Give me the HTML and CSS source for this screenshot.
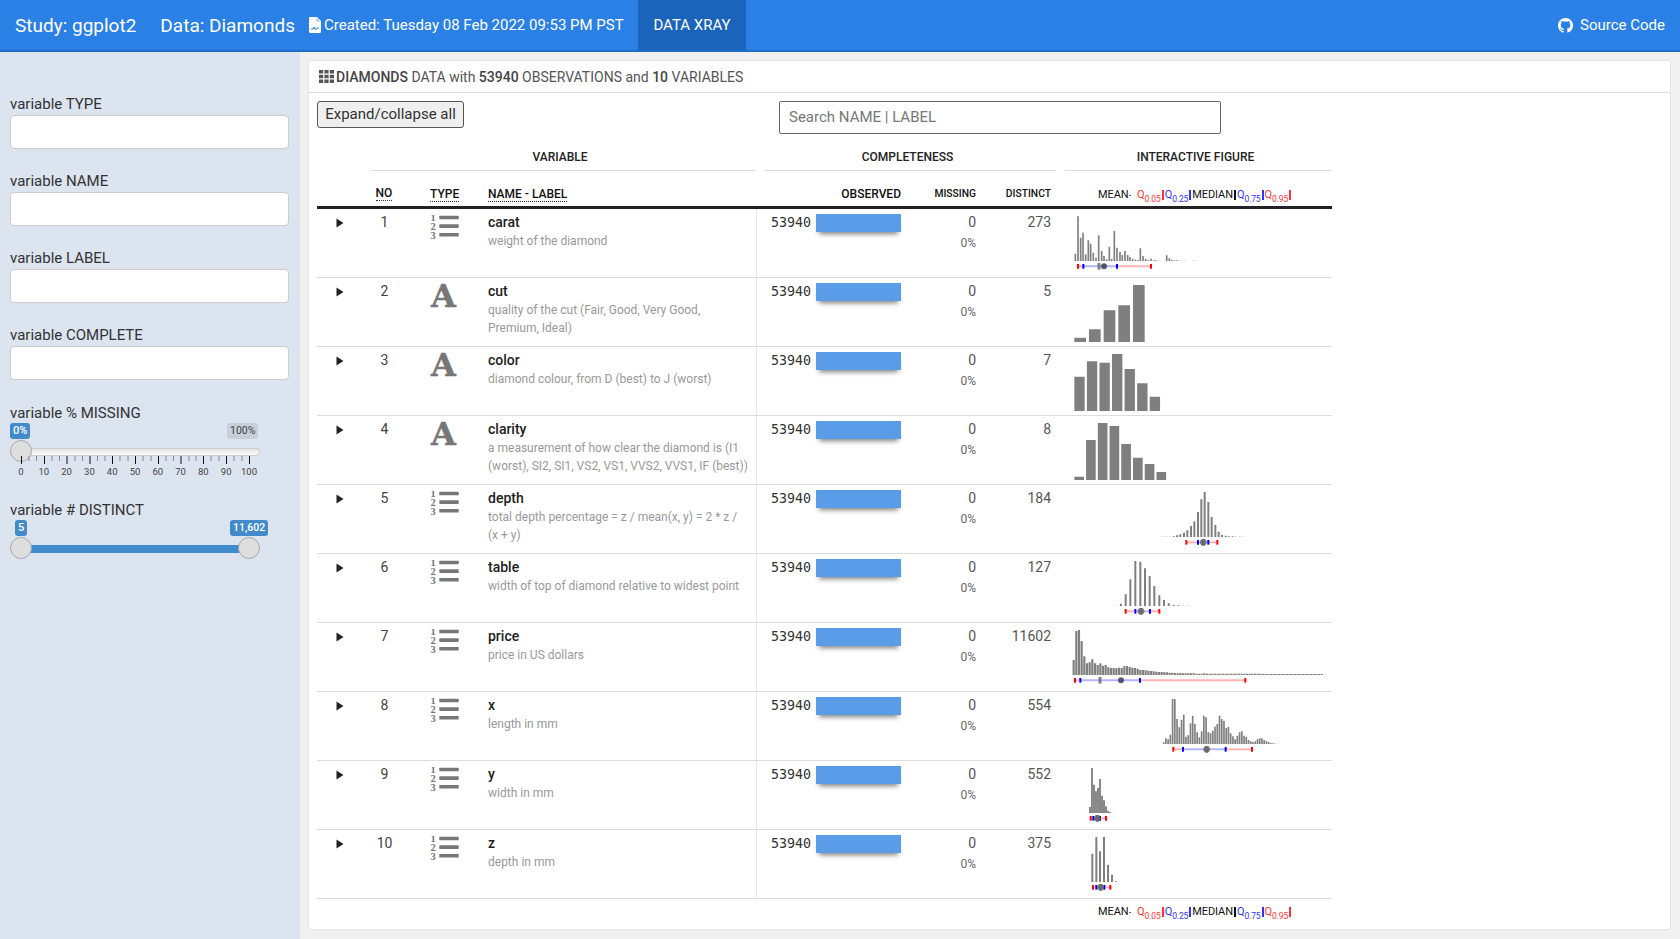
FILE: index.html
```html
<!DOCTYPE html>
<html lang="en">
<head>
<meta charset="utf-8">
<title>Data Xray</title>
<link rel="stylesheet" href="styles.css">
</head>
<body>
<svg class="defs" width="0" height="0" aria-hidden="true">
  <symbol id="num" viewBox="0 0 30 24">
    <text x="0.500" y="6" class="numeral">1</text>
    <text x="0.500" y="15" class="numeral">2</text>
    <text x="0.500" y="23.500" class="numeral">3</text>
    <rect x="9.300" y="0.700" width="19.400" height="3.600" rx="0.600"/>
    <rect x="9.300" y="9.300" width="19.400" height="3.600" rx="0.600"/>
    <rect x="9.300" y="18" width="19.400" height="3.600" rx="0.600"/>
  </symbol>
  <symbol id="tri" viewBox="0 0 8 10"><path d="M0.500 0.500 7.500 5 0.500 9.500Z"/></symbol>
</svg>

<header class="topbar">
  <span class="brand">Study: ggplot2</span>
  <span class="brand data">Data: Diamonds</span>
  <svg class="file-ico" viewBox="0 0 12 16"><path fill="#fff" d="M0 1.200C0 .5.500 0 1.200 0H8l4 4v10.800c0 .7-.5 1.200-1.200 1.200H1.200C.5 16 0 15.500 0 14.800Z"/><path fill="none" stroke="#2a80e4" stroke-width="1" d="M2 12h2l1-2 1.500 3L8 11h2"/><path fill="#2a80e4" d="M7.500 1v3.500H11z" opacity=".5"/></svg>
  <span class="created">Created: Tuesday 08 Feb 2022 09:53 PM PST</span>
  <nav class="tab">DATA XRAY</nav>
  <a class="source">
    <svg class="gh" viewBox="0 0 16 16"><path fill="#fff" d="M8 0C3.580 0 0 3.580 0 8c0 3.540 2.290 6.530 5.470 7.590.4.070.55-.17.55-.38 0-.19-.01-.82-.01-1.490-2.010.37-2.530-.49-2.690-.94-.09-.23-.48-.94-.82-1.130-.28-.15-.68-.52-.01-.53.63-.01 1.080.58 1.230.82.720 1.210 1.870.87 2.330.66.070-.52.28-.87.510-1.070-1.780-.2-3.640-.89-3.640-3.950 0-.87.310-1.590.820-2.150-.08-.2-.36-1.020.08-2.120 0 0 .67-.21 2.200.82.640-.18 1.320-.27 2-.27s1.360.09 2 .27c1.530-1.040 2.200-.82 2.200-.82.440 1.100.160 1.920.08 2.120.510.560.820 1.270.820 2.150 0 3.070-1.870 3.750-3.650 3.950.29.250.54.730.54 1.480 0 1.070-.01 1.930-.01 2.200 0 .21.150.46.550.38A8.010 8.010 0 0 0 16 8c0-4.420-3.580-8-8-8z"/></svg>
    Source Code
  </a>
</header>

<div class="page">
  <aside class="sidebar">
    <label class="filter"><span class="flabel">variable TYPE</span><input class="finput" type="text"></label>
    <label class="filter"><span class="flabel">variable NAME</span><input class="finput" type="text"></label>
    <label class="filter"><span class="flabel">variable LABEL</span><input class="finput" type="text"></label>
    <label class="filter"><span class="flabel">variable COMPLETE</span><input class="finput" type="text"></label>

    <div class="slider-block">
      <span class="flabel">variable % MISSING</span>
      <div class="slider">
        <span class="pill pill-min">0%</span>
        <span class="pill pill-max muted">100%</span>
        <div class="track"></div>
        <span class="thumb thumb-a"></span>
        <svg class="ticks" viewBox="0 0 260 9" width="260" height="9"><path class="tick-major" d="M21.500 0v8M44.500 0v8M67 0v8M90 0v8M112.500 0v8M135.500 0v8M158.500 0v8M181 0v8M203.500 0v8M226.500 0v8M249.500 0v8"/><path class="tick-minor" d="M29 0v5M36.500 0v5M52 0v5M59.500 0v5M75 0v5M82.500 0v5M97.500 0v5M105 0v5M120 0v5M128 0v5M143 0v5M151 0v5M166 0v5M173.500 0v5M189 0v5M196 0v5M211 0v5M219 0v5M234 0v5M242 0v5"/></svg>
        <div class="tick-labels"><span>0</span><span>10</span><span>20</span><span>30</span><span>40</span><span>50</span><span>60</span><span>70</span><span>80</span><span>90</span><span>100</span></div>
      </div>
    </div>

    <div class="slider-block second">
      <span class="flabel">variable # DISTINCT</span>
      <div class="slider">
        <span class="pill pill-five">5</span>
        <span class="pill pill-top">11,602</span>
        <div class="track blue"></div>
        <span class="thumb thumb-a"></span>
        <span class="thumb thumb-b"></span>
      </div>
    </div>
  </aside>

  <main class="content">
    <section class="box">
      <div class="box-head">
        <svg class="th-ico" viewBox="0 0 15 13"><path d="M0 0h4.200v3.600H0zM5.400 0h4.200v3.600H5.400zM10.800 0H15v3.600h-4.200zM0 4.700h4.200v3.600H0zM5.400 4.700h4.200v3.600H5.400zM10.800 4.700H15v3.600h-4.200zM0 9.400h4.200V13H0zM5.400 9.400h4.200V13H5.400zM10.800 9.400H15V13h-4.200z"/></svg>
        <span><b>DIAMONDS</b> DATA with <b>53940</b> OBSERVATIONS and <b>10</b> VARIABLES</span>
      </div>
      <div class="box-body">
        <div class="tools">
          <button class="btn" type="button">Expand/collapse all</button>
          <input class="search" type="text" placeholder="Search NAME | LABEL">
        </div>

        <div class="table">
          <div class="groups">
            <span class="group g1">VARIABLE</span>
            <span class="group g2">COMPLETENESS</span>
            <span class="group g3">INTERACTIVE FIGURE</span>
          </div>
          <div class="grid head">
            <span></span>
            <span class="c-no"><abbr>NO</abbr></span>
            <span class="c-type"><abbr>TYPE</abbr></span>
            <span class="c-name"><abbr>NAME - LABEL</abbr></span>
            <span class="right c-obs-h">OBSERVED</span>
            <span class="right">MISSING</span>
            <span class="right">DISTINCT</span>
            <div class="legend">
              <span class="l-mean">MEAN<i class="dot"></i></span>
              <span class="red">Q<sub>0.05</sub><i class="mark"></i></span>
              <span class="blue">Q<sub>0.25</sub><i class="mark"></i></span>
              <span>MEDIAN<i class="mark"></i></span>
              <span class="blue">Q<sub>0.75</sub><i class="mark"></i></span>
              <span class="red">Q<sub>0.95</sub><i class="mark"></i></span>
            </div>
          </div>

          <div class="grid row">
            <svg class="arrow"><use href="#tri"/></svg>
            <span class="c-no">1</span>
            <svg class="ico"><use href="#num"/></svg>
            <div class="c-name"><div class="vname">carat</div><div class="vdesc">weight of the diamond</div></div>
            <div class="c-obs"><span class="obs">53940</span><span class="bar"></span></div>
            <div class="c-miss"><div>0</div><div class="pct">0%</div></div>
            <div class="c-dist">273</div>
            <svg class="chart" data-chart="carat" viewBox="0 0 816 204"></svg>
          </div>
          <div class="grid row">
            <svg class="arrow"><use href="#tri"/></svg>
            <span class="c-no">2</span>
            <span class="ico-a">A</span>
            <div class="c-name"><div class="vname">cut</div><div class="vdesc">quality of the cut (Fair, Good, Very Good, Premium, Ideal)</div></div>
            <div class="c-obs"><span class="obs">53940</span><span class="bar"></span></div>
            <div class="c-miss"><div>0</div><div class="pct">0%</div></div>
            <div class="c-dist">5</div>
            <svg class="chart" data-chart="cut" viewBox="0 0 816 204"></svg>
          </div>
          <div class="grid row">
            <svg class="arrow"><use href="#tri"/></svg>
            <span class="c-no">3</span>
            <span class="ico-a">A</span>
            <div class="c-name"><div class="vname">color</div><div class="vdesc">diamond colour, from D (best) to J (worst)</div></div>
            <div class="c-obs"><span class="obs">53940</span><span class="bar"></span></div>
            <div class="c-miss"><div>0</div><div class="pct">0%</div></div>
            <div class="c-dist">7</div>
            <svg class="chart" data-chart="color" viewBox="0 0 816 204"></svg>
          </div>
          <div class="grid row">
            <svg class="arrow"><use href="#tri"/></svg>
            <span class="c-no">4</span>
            <span class="ico-a">A</span>
            <div class="c-name"><div class="vname">clarity</div><div class="vdesc">a measurement of how clear the diamond is (I1 (worst), SI2, SI1, VS2, VS1, VVS2, VVS1, IF (best))</div></div>
            <div class="c-obs"><span class="obs">53940</span><span class="bar"></span></div>
            <div class="c-miss"><div>0</div><div class="pct">0%</div></div>
            <div class="c-dist">8</div>
            <svg class="chart" data-chart="clarity" viewBox="0 0 816 204"></svg>
          </div>
          <div class="grid row">
            <svg class="arrow"><use href="#tri"/></svg>
            <span class="c-no">5</span>
            <svg class="ico"><use href="#num"/></svg>
            <div class="c-name"><div class="vname">depth</div><div class="vdesc">total depth percentage = z / mean(x, y) = 2 * z / (x + y)</div></div>
            <div class="c-obs"><span class="obs">53940</span><span class="bar"></span></div>
            <div class="c-miss"><div>0</div><div class="pct">0%</div></div>
            <div class="c-dist">184</div>
            <svg class="chart" data-chart="depth" viewBox="0 0 816 204"></svg>
          </div>
          <div class="grid row">
            <svg class="arrow"><use href="#tri"/></svg>
            <span class="c-no">6</span>
            <svg class="ico"><use href="#num"/></svg>
            <div class="c-name"><div class="vname">table</div><div class="vdesc">width of top of diamond relative to widest point</div></div>
            <div class="c-obs"><span class="obs">53940</span><span class="bar"></span></div>
            <div class="c-miss"><div>0</div><div class="pct">0%</div></div>
            <div class="c-dist">127</div>
            <svg class="chart" data-chart="table" viewBox="0 0 816 204"></svg>
          </div>
          <div class="grid row">
            <svg class="arrow"><use href="#tri"/></svg>
            <span class="c-no">7</span>
            <svg class="ico"><use href="#num"/></svg>
            <div class="c-name"><div class="vname">price</div><div class="vdesc">price in US dollars</div></div>
            <div class="c-obs"><span class="obs">53940</span><span class="bar"></span></div>
            <div class="c-miss"><div>0</div><div class="pct">0%</div></div>
            <div class="c-dist">11602</div>
            <svg class="chart" data-chart="price" viewBox="0 0 816 204"></svg>
          </div>
          <div class="grid row">
            <svg class="arrow"><use href="#tri"/></svg>
            <span class="c-no">8</span>
            <svg class="ico"><use href="#num"/></svg>
            <div class="c-name"><div class="vname">x</div><div class="vdesc">length in mm</div></div>
            <div class="c-obs"><span class="obs">53940</span><span class="bar"></span></div>
            <div class="c-miss"><div>0</div><div class="pct">0%</div></div>
            <div class="c-dist">554</div>
            <svg class="chart" data-chart="x" viewBox="0 0 816 204"></svg>
          </div>
          <div class="grid row">
            <svg class="arrow"><use href="#tri"/></svg>
            <span class="c-no">9</span>
            <svg class="ico"><use href="#num"/></svg>
            <div class="c-name"><div class="vname">y</div><div class="vdesc">width in mm</div></div>
            <div class="c-obs"><span class="obs">53940</span><span class="bar"></span></div>
            <div class="c-miss"><div>0</div><div class="pct">0%</div></div>
            <div class="c-dist">552</div>
            <svg class="chart" data-chart="y" viewBox="0 0 816 204"></svg>
          </div>
          <div class="grid row">
            <svg class="arrow"><use href="#tri"/></svg>
            <span class="c-no">10</span>
            <svg class="ico"><use href="#num"/></svg>
            <div class="c-name"><div class="vname">z</div><div class="vdesc">depth in mm</div></div>
            <div class="c-obs"><span class="obs">53940</span><span class="bar"></span></div>
            <div class="c-miss"><div>0</div><div class="pct">0%</div></div>
            <div class="c-dist">375</div>
            <svg class="chart" data-chart="z" viewBox="0 0 816 204"></svg>
          </div>

          <div class="grid foot">
            <div class="legend legend-foot">
              <span class="l-mean">MEAN<i class="dot"></i></span>
              <span class="red">Q<sub>0.05</sub><i class="mark"></i></span>
              <span class="blue">Q<sub>0.25</sub><i class="mark"></i></span>
              <span>MEDIAN<i class="mark"></i></span>
              <span class="blue">Q<sub>0.75</sub><i class="mark"></i></span>
              <span class="red">Q<sub>0.95</sub><i class="mark"></i></span>
            </div>
          </div>
        </div>
      </div>
    </section>
  </main>
</div>
<script src="charts.js"></script>
</body>
</html>
```
FILE: styles.css
```css
* { box-sizing: border-box; }
html, body { margin: 0; height: 939px; overflow: hidden; }
body { font-family: Roboto, "Noto Sans", sans-serif; font-size: 14px; color: #333; background: #f0f0f0; }
.defs { display: none; }

.topbar { height: 52px; background: #2a80e4; border-bottom: 2px solid #1f6cc4; color: #fff; display: flex; align-items: center; padding-left: 15px; }
.brand { font-size: 19px; margin-right: 24px; }
.brand.data { margin-right: 14px; }
.file-ico { width: 12px; height: 16px; margin-right: 3px; }
.created { font-size: 15px; width: 314px; }
.tab { background: #1b64bb; align-self: stretch; width: 108px; display: flex; align-items: center; justify-content: center; font-size: 15px; }
.source { margin-left: auto; margin-right: 15px; font-size: 15px; display: flex; align-items: center; gap: 7px; }
.gh { width: 15px; height: 15px; }

.page { display: flex; height: 887px; }
.sidebar { width: 300px; background: #dce4f0; padding: 42px 10px 0; flex: none; }
.filter { display: block; height: 77px; }
.flabel { display: block; font-size: 15px; font-weight: 400; line-height: 21px; color: #333; }
.finput { display: block; width: 279px; height: 34px; background: #fff; border: 1px solid #ccc; border-radius: 4px; }
.slider-block .flabel { line-height: 22px; margin-bottom: -2px; }
.slider-block.second { margin-top: 5px; }
.slider-block.second .flabel { margin-bottom: -3px; }
.slider { position: relative; height: 72px; }
.slider-block.second .slider { height: 50px; }
.pill { position: absolute; top: 1px; background: #428bca; color: #fff; font-size: 11px; font-weight: 500; line-height: 16px; height: 16px; padding: 0 3px; border-radius: 3px; }
.pill-min { left: 0; }
.pill.muted { background: #c8cfd9; color: #444; font-weight: 400; }
.pill-max { left: 217px; font-size: 10.500px; }
.pill-five { left: 5px; top: 2px; }
.pill-top { left: 220px; top: 2px; font-size: 10.500px; }
.track { position: absolute; left: 0; top: 26px; width: 250px; height: 8px; border-radius: 4px; background: linear-gradient(#e4e4e4, #fafafa); border: 1px solid #ccc; }
.track.blue { background: #428bca; border: 0; left: 12px; width: 228px; top: 27px; border-radius: 0; }
.thumb { position: absolute; top: 18px; width: 22px; height: 22px; border-radius: 50%; background: #dedede; border: 1px solid #aaa; }
.thumb-a { left: 0; }
.thumb-b { left: 228px; }
.slider-block.second .thumb { top: 19px; }
.ticks { position: absolute; left: -10px; top: 34px; }
.tick-major { stroke: #111; stroke-width: 1; fill: none; }
.tick-minor { stroke: #888; stroke-width: 1; fill: none; }
.tick-labels { position: absolute; left: 11px; top: 44px; width: 228px; display: flex; justify-content: space-between; font-size: 9.500px; line-height: 12px; color: #444; }
.tick-labels span { width: 0; display: flex; justify-content: center; }

.content { flex: 1; padding: 8px 9px 9px 8px; min-width: 0; }
.box { background: #fff; border: 1px solid #e4e4e4; border-radius: 3px; height: 870px; }
.box-head { height: 32px; border-bottom: 1px solid #ddd; display: flex; align-items: center; gap: 2px; padding-left: 10px; color: #555; font-size: 14px; }
.box-head b { font-weight: 500; color: #444; }
.th-ico { width: 15px; height: 13px; fill: #555; }
.box-body { padding: 8px 0 0 8px; }
.tools { display: flex; align-items: flex-start; height: 33px; }
.btn { width: 147px; height: 27px; background: #efefef; border: 1px solid #555; border-radius: 3px; font: 15px Roboto, sans-serif; color: #333; padding: 0 0 2px; }
.search { margin-left: 315px; width: 442px; height: 33px; border: 1px solid #666; border-radius: 2px; font: 15px Roboto, sans-serif; padding: 0 9px 2px; color: #333; }
.search::placeholder { color: #777; opacity: 1; }

.table { width: 1015px; }
.groups { display: grid; grid-template-columns: 386px 291px 267px; column-gap: 9px; margin-left: 53px; margin-top: 12px; height: 25px; }
.group { font-size: 12px; font-weight: 500; color: #222; text-align: center; line-height: 22px; border-bottom: 1px solid #ddd; padding-right: 6px; }
.grid { display: grid; grid-template-columns: 53px 28px 90px 269px 144px 75px 75px 281px; }
.head { height: 38px; border-bottom: 3px solid #222; align-items: end; padding-bottom: 4px; font-size: 12px; font-weight: 500; color: #111; line-height: 16px; }
.head abbr { border-bottom: 1px dotted #333; text-decoration: none; }
.head .c-no { text-align: center; font-size: 12px; }
.head .c-type { padding-left: 32px; }
.right { text-align: right; font-size: 10.300px; }
.right.c-obs-h { font-size: 12px; }
.row { height: 69px; border-bottom: 1px solid #ddd; }
.arrow { width: 8px; height: 10px; margin: 9px 0 0 19px; fill: #222; }
.c-no { text-align: center; line-height: 18px; padding-top: 4px; color: #444; }
.row .c-no { padding-left: 1px; }
.head .c-no, .head .c-type, .head .c-name { padding-top: 0; color: #111; }
.ico { width: 30px; height: 24px; margin: 6px 0 0 32px; fill: #777; overflow: visible; }
.numeral { font: bold 10.500px "Liberation Serif", serif; fill: #777; }
.ico-a { font: bold 32px/1 "DejaVu Serif", serif; color: #777; padding: 2px 0 0 33px; -webkit-text-stroke: .5px #777; }
.c-name { padding: 4px 8px 0 0; border-right: 1px solid #e8e8e8; }
.head .c-name { border-right: 0; }
.vname { font-size: 14px; font-weight: 500; color: #222; line-height: 18px; }
.vdesc { font-size: 12px; color: #999; line-height: 17.500px; margin-top: 2px; }
.c-obs { display: flex; align-items: flex-start; padding: 5px 0 0 14px; }
.obs { font: 13.330px/18px "DejaVu Sans Mono", monospace; color: #333; width: 40px; }
.bar { width: 85px; height: 18px; margin: 0 0 0 5px; background: #5b9ce8; box-shadow: 0 5px 5px -3px rgba(0,0,0,.5); }
.c-miss, .c-dist { text-align: right; padding-top: 4px; line-height: 18px; color: #555; }
.pct { font-size: 12px; color: #666; margin-top: 3px; }
.chart { width: 272px; height: 68px; margin-left: 9px; display: block; overflow: visible; }
.bars { fill: none; stroke: #7f7f7f; }
.foot { height: 26px; align-items: center; }

.legend { display: flex; align-items: center; padding-left: 47px; font-size: 11px; letter-spacing: -.1px; color: #111; white-space: nowrap; line-height: 14px; font-weight: 400; }
.legend-foot { grid-column: 8; }
.legend span { margin-right: 1px; display: flex; align-items: center; }
.legend .l-mean { width: 37px; margin-right: 2px; }
.legend sub { font-size: 8.500px; line-height: 1; vertical-align: baseline; align-self: flex-end; transform: translateY(1px); }
.red { color: #f33; }
.blue { color: #33f; }
.mark { display: inline-block; width: 2px; height: 10px; background: currentColor; margin-left: 1px; }
.dot { display: inline-block; width: 2px; height: 1px; margin-left: 1px; background: #666; }
.q-red { stroke: #ffb4b4; stroke-width: 6; }
.q-blue { stroke: #b4b4ff; stroke-width: 6; }
.q-tick-red { stroke: #f00; stroke-width: 6; }
.q-tick-blue { stroke: #00f; stroke-width: 6; }
.q-med { stroke: #666; stroke-width: 9; opacity: .8; }
.q-mean { fill: #3c3c5a; opacity: .85; }
.q-mean.merged { fill: #666; }
```
FILE: charts.js
```js
// Histogram data, in units of one third of a pixel (viewBox is 3x the pixel size).
var seq = function (start, pitch, hs) {
  return hs.map(function (h, i) { return [start + pitch * i, h]; });
};
var tail = [];
for (var t = 0; t < 14; t++) tail.push(4);
for (t = 0; t < 23; t++) tail.push(3);
var CHARTS = {
  carat: { base: 156, w: 5, bars: [[46,22],[54,134],[62,70],[69,85],[77,20],[85,62],[92,52],[100,25],[108,10],[116,77],[125,30],[132,15],[140,5],[148,43],[155,7],[163,90],[171,40],[180,27],[187,18],[195,30],[203,18],[210,12],[218,7],[226,4],[234,3],[241,38],[249,15],[257,7],[265,3],[273,7],[281,2],[288,2],[296,1],[320,17],[328,8],[335,4],[343,2],[351,2],[359,1],[367,1],[375,1],[398,1],[406,1]], q: [54,70,117,132,171,273] },
  cut: { base: 192, w: 35, bars: seq(60.5, 44, [13,38,95,110,171]) },
  color: { base: 192, w: 31, bars: seq(58.5, 37.7, [103,149,145,171,126,83,43]) },
  clarity: { base: 192, w: 29, bars: seq(57.5, 35.2, [10,120,171,162,108,67,48,24]) },
  depth: { base: 156, w: 6, bars: [[310,1],[320,1],[330,1],[341,2],[351,5],[361,8],[372,13],[382,20],[393,33],[403,47],[414,75],[424,113],[434,135],[445,105],[455,60],[466,36],[476,16],[486,6],[497,4],[507,2],[518,2],[528,1],[540,1],[550,1]], q: [379,414,430,430,445,472] },
  table: { base: 156, w: 6, bars: [[172,1],[183,7],[197,35],[211,80],[226,135],[241,133],[255,113],[269,90],[283,60],[298,32],[312,18],[326,8],[341,3],[355,2],[370,1],[384,1]], q: [197,226,243,243,270,298] },
  price: { base: 156, w: 6.5, bars: seq(41, 8, [45,132,135,102,56,35,38,47,35,30,35,28,30,23,21,21,20,22,21,26,27,24,22,21,19,15,15,14,13,12,11,10,9,9,8,8,7,7,6,5,6,5,5,5,5,5,4,4,4,5,4,4,4,4,4,4,4].concat(tail)), q: [45,61,120,183,240,556] },
  x: { base: 156, w: 5, bars: seq(311, 6.7, [5,17,14,28,135,135,75,50,72,88,22,26,62,85,60,35,20,38,85,80,35,32,40,52,60,85,75,70,48,52,32,23,14,25,35,38,25,22,12,8,6,8,14,17,17,12,8,6,3,2,1,1]), q: [340,369,440,440,497,576] },
  y: { base: 156, w: 5.500, bars: [[90,18],[96,135],[102,85],[108,65],[114,75],[120,102],[126,52],[132,38],[138,20],[144,7],[150,3],[156,1]], q: [92,100,112,112,120,138] },
  z: { base: 156, w: 6, bars: [[97,85],[109,135],[120,92],[132,135],[144,52],[156,22],[168,2]], q: [99,109,122,122,133,151] }
};

function svgEl(name, attrs) {
  var el = document.createElementNS('http://www.w3.org/2000/svg', name);
  for (var k in attrs) el.setAttribute(k, attrs[k]);
  return el;
}
function seg(svg, cls, x1, x2, y1, y2) {
  svg.appendChild(svgEl('line', { 'class': cls, x1: x1, x2: x2, y1: y1, y2: y2 }));
}

document.querySelectorAll('.chart').forEach(function (svg) {
  var c = CHARTS[svg.getAttribute('data-chart')];
  var d = c.bars.map(function (b) { return 'M' + b[0] + ' ' + c.base + 'v-' + b[1]; }).join('');
  svg.appendChild(svgEl('path', { 'class': 'bars', d: d, 'stroke-width': c.w }));
  if (!c.q) return;
  var y = c.base + 16, q = c.q, merged = q[2] === q[3];
  seg(svg, 'q-red', q[0], q[1], y, y);
  seg(svg, 'q-red', q[4], q[5], y, y);
  seg(svg, 'q-blue', q[1], q[4], y, y);
  [q[0], q[5]].forEach(function (x) { seg(svg, 'q-tick-red', x, x, y - 7, y + 7); });
  [q[1], q[4]].forEach(function (x) { seg(svg, 'q-tick-blue', x, x, y - 7, y + 7); });
  seg(svg, 'q-med', q[2], q[2], y - 10, y + 10);
  svg.appendChild(svgEl('circle', { 'class': merged ? 'q-mean merged' : 'q-mean', cx: q[3], cy: y, r: merged ? 10 : 9 }));
});
```
